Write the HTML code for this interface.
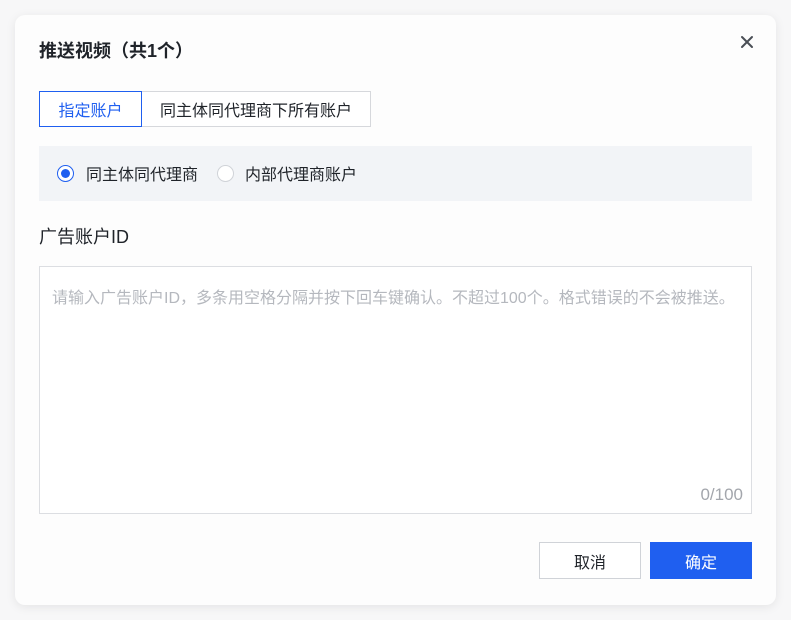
<!DOCTYPE html>
<html><head><meta charset="utf-8"><style>
*{box-sizing:border-box;margin:0;padding:0}
body{width:791px;height:620px;background:#f7f7f8;font-family:"Liberation Sans","Noto Sans CJK SC",sans-serif;position:relative;overflow:hidden}
.dlg{position:absolute;left:15px;top:15px;width:761px;height:590px;background:#fdfdfd;border-radius:10px;box-shadow:0 2px 10px rgba(0,0,0,.08)}
.a{position:absolute;white-space:nowrap}
.title{left:39px;top:37px;font-size:18px;font-weight:bold;color:#1f2329}
.tab{top:91px;height:36px;border:1px solid #d6d8dc;font-size:16px;color:#1f2329;display:flex;align-items:center;justify-content:center;background:#fff}
.panel{left:39px;top:146px;width:713px;height:55px;background:#f2f4f7}
.r{top:165px;width:17px;height:17px;border-radius:50%;border:1px solid #d0d3d8;background:#fff}
.lbl{font-size:16px;color:#1f2329}
.ta{left:39px;top:266px;width:713px;height:248px;border:1px solid #dcdee2;background:#fff}
.btn{top:542px;height:37px;width:102px;font-size:16px;display:flex;align-items:center;justify-content:center}
</style></head><body>
<div class="dlg"></div>
<div class="a title">推送视频（共1个）</div>
<svg class="a" style="left:740px;top:35px" width="14" height="14" viewBox="0 0 14 14"><path d="M2 2L12 12M12 2L2 12" stroke="#4a4e55" stroke-width="2" stroke-linecap="round"/></svg>
<div class="a tab" style="left:141px;width:230px">同主体同代理商下所有账户</div>
<div class="a tab" style="left:39px;width:103px;border-color:#1f5ff0;color:#1f5ff0">指定账户</div>
<div class="a panel"></div>
<div class="a r" style="left:57px;border-color:#1f5ff0"><div style="position:absolute;left:3px;top:3px;width:9px;height:9px;border-radius:50%;background:#1f5ff0"></div></div>
<div class="a lbl" style="left:86px;top:161px">同主体同代理商</div>
<div class="a r" style="left:217px"></div>
<div class="a lbl" style="left:245px;top:161px">内部代理商账户</div>
<div class="a" style="left:39px;top:223px;font-size:18px;color:#1f2329">广告账户ID</div>
<div class="a ta"></div>
<div class="a" style="left:52px;top:284px;font-size:16px;color:#b5b8be">请输入广告账户ID，多条用空格分隔并按下回车键确认。不超过100个。格式错误的不会被推送。</div>
<div class="a" style="right:48px;top:485px;font-size:17px;color:#a3a6ac">0/100</div>
<div class="a btn" style="left:539px;border:1px solid #d0d3d8;background:#fff;color:#1f2329">取消</div>
<div class="a btn" style="left:650px;background:#1f5ff0;color:#fff">确定</div>
</body></html>
